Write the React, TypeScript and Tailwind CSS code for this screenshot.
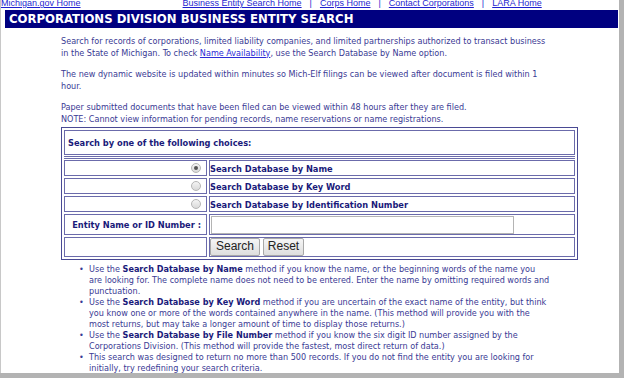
const body = "font-['DejaVu_Sans_Condensed','DejaVu_Sans',sans-serif] font-stretch-condensed";

function Radio({ checked }: { checked?: boolean }) {
  return (
    <span className="inline-flex h-[10px] w-[10px] items-center justify-center rounded-full border border-[#b5b5b5] bg-gradient-to-b from-[#f4f4f4] to-[#d9d9d9]">
      {checked && <span className="h-[4px] w-[4px] rounded-full bg-[#555]" />}
    </span>
  );
}

function Row({ left, right, h }: { left: React.ReactNode; right: React.ReactNode; h: string }) {
  return (
    <div className="flex gap-[2px]">
      <div className={`flex w-[143px] items-center justify-end border border-[#6b6bab] pr-[5px] ${h}`}>{left}</div>
      <div className={`flex flex-1 items-center border border-[#6b6bab] ${h}`}>{right}</div>
    </div>
  );
}

const Label = ({ children }: { children: React.ReactNode }) => (
  <span className="text-[9.2px] font-bold leading-[11px] text-[#1a1a7a]">{children}</span>
);

const tips = [
  {
    w: "w-[470px]",
    text: (
      <>
        Use the <b className="text-[#1a1a7a]">Search Database by Name</b> method if you know the name, or the beginning words of the name you
        <br />
        are looking for. The complete name does not need to be entered. Enter the name by omitting required words and punctuation.
      </>
    ),
  },
  {
    w: "w-[461px]",
    text: <>Use the <b className="text-[#1a1a7a]">Search Database by Key Word</b> method if you are uncertain of the exact name of the entity, but think you know one or more of the words contained anywhere in the name. (This method will provide you with the most returns, but may take a longer amount of time to display those returns.)</>,
  },
  {
    w: "w-[461px]",
    text: <>Use the <b className="text-[#1a1a7a]">Search Database by File Number</b> method if you know the six digit ID number assigned by the Corporations Division. (This method will provide the fastest, most direct return of data.)</>,
  },
  {
    w: "w-[461px]",
    text: <>This search was designed to return no more than 500 records. If you do not find the entity you are looking for initially, try redefining your search criteria.</>,
  },
];

export default function App() {
  return (
    <div className="h-[378px] w-[624px] overflow-hidden bg-[#b3b3b3]">
      <div className={`h-[373px] w-[619px] border-l border-[#c8c8c8] bg-white ${body}`}>
        {/* top links, clipped */}
        <div className="flex h-[10px] overflow-hidden font-['Liberation_Sans',Arial,sans-serif] text-[9px] leading-[10px] text-[#1f1fd0]">
          <div className="-mt-[2px] flex w-full">
            <a className="underline">Michigan.gov Home</a>
            <div className="ml-[102px] flex gap-[8px]">
              <a className="underline">Business Entity Search Home</a>
              <span>|</span>
              <a className="underline">Corps Home</a>
              <span>|</span>
              <a className="underline">Contact Corporations</a>
              <span>|</span>
              <a className="underline">LARA Home</a>
            </div>
          </div>
        </div>

        {/* title bar */}
        <div className="ml-[4px] flex h-[18px] w-[613px] items-center bg-[#000080] pl-[4px]">
          <h1 className="text-[13px] font-bold text-white">CORPORATIONS DIVISION BUSINESS ENTITY SEARCH</h1>
        </div>

        <div className="pl-[60px] pt-[8px] text-[9px] leading-[11.5px] text-[#3a3a94]">
          <p className="w-[494px]">
            Search for records of corporations, limited liability companies, and limited partnerships authorized to transact business
            in the State of Michigan. To check <a className="text-[#2b2bd6] underline">Name Availability</a>, use the Search Database by Name option.
          </p>
          <p className="mt-[10px] w-[494px]">
            The new dynamic website is updated within minutes so Mich-Elf filings can be viewed after document is filed within 1 hour.
          </p>
          <p className="mt-[10px] w-[494px]">
            Paper submitted documents that have been filed can be viewed within 48 hours after they are filed.
            <br />
            NOTE: Cannot view information for pending records, name reservations or name registrations.
          </p>

          {/* search table */}
          <div className="mt-[2px] w-[517px] border border-[#4a4a94] p-[2px]">
            <div className="flex h-[25px] items-center border border-[#6b6bab] pl-[3px]">
              <Label>Search by one of the following choices:</Label>
            </div>
            <div className="my-[1px] h-[3px] border-y border-[#6b6bab]" />
            <div className="flex flex-col gap-[2px]">
              <Row h="h-[16px]" left={<Radio checked />} right={<Label>Search Database by Name</Label>} />
              <Row h="h-[16px]" left={<Radio />} right={<Label>Search Database by Key Word</Label>} />
              <Row h="h-[16px]" left={<Radio />} right={<Label>Search Database by Identification Number</Label>} />
              <Row
                h="h-[21px]"
                left={<Label>Entity Name or ID Number :</Label>}
                right={<input className="ml-[1px] h-[18px] w-[303px] border border-[#b4b4b4] bg-white outline-none" />}
              />
              <Row
                h="h-[20px]"
                left={null}
                right={
                  <div className="flex gap-[3px] font-['Liberation_Sans',Arial,sans-serif] text-[12px] text-[#222]">
                    <button className="h-[18px] w-[50px] rounded-[2px] border border-[#a8a8a8] bg-gradient-to-b from-[#f6f6f6] to-[#dedede]">Search</button>
                    <button className="h-[18px] w-[41px] rounded-[2px] border border-[#a8a8a8] bg-gradient-to-b from-[#f6f6f6] to-[#dedede]">Reset</button>
                  </div>
                }
              />
            </div>
          </div>

          <ul className="mt-[4px] pl-[18px] leading-[11px]">
            {tips.map((t, i) => (
              <li key={i} className="flex">
                <span className="w-[10px] shrink-0">•</span>
                <span className={t.w}>{t.text}</span>
              </li>
            ))}
          </ul>
        </div>
      </div>
    </div>
  );
}
